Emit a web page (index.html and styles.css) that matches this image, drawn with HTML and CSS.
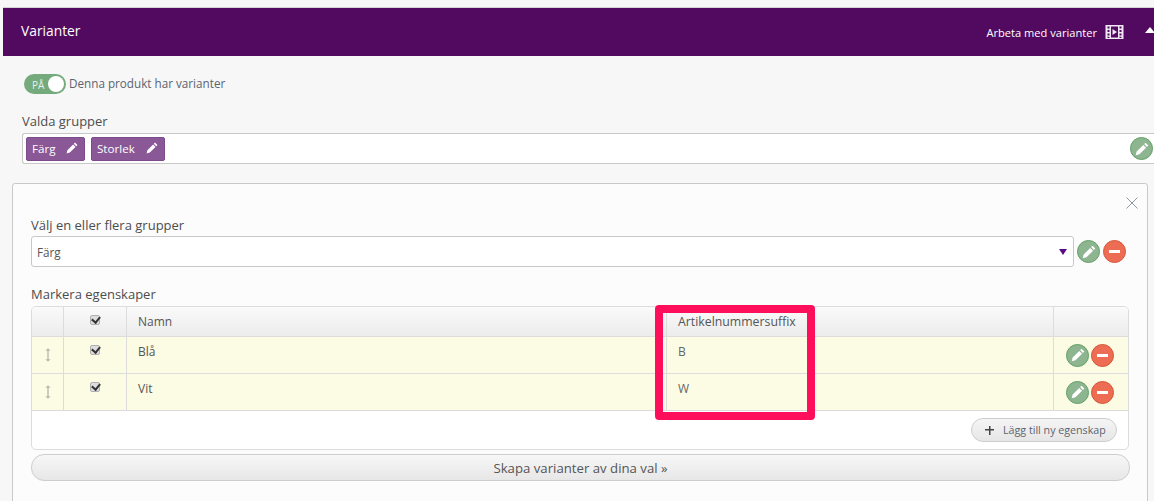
FILE: index.html
```html
<!DOCTYPE html>
<html lang="sv">
<head>
<meta charset="utf-8">
<title>Varianter</title>
<link rel="stylesheet" href="styles.css">
</head>
<body>
<svg class="defs" width="0" height="0" aria-hidden="true">
  <symbol id="pen" viewBox="0 0 12 12"><path d="M9 .6l2.400 2.400-1.200 1.200-2.400-2.400zM7.100 2.500l2.400 2.400-5.700 5.700-3.200.8.8-3.200z" fill="currentColor"/></symbol>
  <symbol id="grip" viewBox="0 0 7 16"><path d="M3.500 0l3 3H4.300v10h2.200l-3 3-3-3h2.200V3H.5z" fill="currentColor"/></symbol>
</svg>
<div class="page">
  <header class="head">
    <h2 class="head-title">Varianter</h2>
    <div class="head-tools">
      <span class="tools-text">Arbeta med varianter</span>
      <svg class="film" viewBox="0 0 18 14" aria-hidden="true"><path fill-rule="evenodd" d="M0 0h18v14H0zM2 1.500v2h2v-2zm0 3.500v2h2V5zm0 3.500v2h2v-2zm0 3v1.500h2V12zM14 1.500v2h2v-2zm0 3.500v2h2V5zm0 3.500v2h2v-2zm0 3v1.500h2V12zM5.500 1.500v11h7v-11z" fill="currentColor"/><path d="M7 4l4.500 3L7 10z" fill="currentColor"/></svg>
      <span class="caret"></span>
    </div>
  </header>

  <div class="toggle-row">
    <span class="toggle"><span class="toggle-text">PÅ</span><span class="knob"></span></span>
    <span class="toggle-label">Denna produkt har varianter</span>
  </div>

  <div class="selected">
    <div class="label">Valda grupper</div>
    <div class="tagbox">
      <span class="tag">Färg<svg class="tag-pen"><use href="#pen"/></svg></span>
      <span class="tag tag-wide">Storlek<svg class="tag-pen"><use href="#pen"/></svg></span>
      <button class="round green box-edit"><svg><use href="#pen"/></svg></button>
    </div>
  </div>

  <section class="card">
    <div class="close-row"><svg class="close" viewBox="0 0 12 12" aria-hidden="true"><path d="M.5.5l11 11M11.500.5l-11 11" stroke="currentColor" fill="none"/></svg></div>
    <div class="label">Välj en eller flera grupper</div>
    <div class="select-row">
      <div class="select"><span>Färg</span><span class="arrow"></span></div>
      <button class="round green"><svg><use href="#pen"/></svg></button>
      <button class="round red"><i></i></button>
    </div>
    <div class="label label-props">Markera egenskaper</div>
    <div class="table">
      <div class="row row-head">
        <div class="c c-grip"></div>
        <div class="c c-check"><span class="check"></span></div>
        <div class="c c-name"><span>Namn</span></div>
        <div class="c c-suffix"><span class="suffix-title">Artikelnummersuffix</span></div>
        <div class="c c-act"></div>
      </div>
      <div class="row">
        <div class="c c-grip"><svg class="grip"><use href="#grip"/></svg></div>
        <div class="c c-check"><span class="check"></span></div>
        <div class="c c-name"><span>Blå</span></div>
        <div class="c c-suffix"><span>B</span></div>
        <div class="c c-act"><button class="round green"><svg><use href="#pen"/></svg></button><button class="round red"><i></i></button></div>
      </div>
      <div class="row">
        <div class="c c-grip"><svg class="grip"><use href="#grip"/></svg></div>
        <div class="c c-check"><span class="check"></span></div>
        <div class="c c-name"><span>Vit</span></div>
        <div class="c c-suffix"><span>W</span></div>
        <div class="c c-act"><button class="round green"><svg><use href="#pen"/></svg></button><button class="round red"><i></i></button></div>
      </div>
      <div class="table-foot"><button class="add"><span class="plus"></span>Lägg till ny egenskap</button></div>
    </div>
    <button class="create">Skapa varianter av dina val »</button>
  </section>
</div>
<div class="highlight"></div>
</body>
</html>
```

FILE: styles.css
```css
* { box-sizing: border-box; }
html, body { margin: 0; height: 501px; overflow: hidden; }
body { background: #f7f7f7; font-family: "Open Sans", "Liberation Sans", sans-serif; font-size: 12px; color: #555; position: relative; }
.defs { position: absolute; }
button { font-family: inherit; padding: 0; }
.page { margin-left: 3px; width: 1165px; padding-top: 7px; }
.head { height: 49px; border-top: 1px solid #d4d4d4; background: #520a60; color: #fff; display: flex; align-items: center; justify-content: space-between; padding: 0 0 4px 18px; }
.head-title { margin: 0; font-size: 13.8px; font-weight: 400; }
.head-tools { display: flex; align-items: center; margin-right: 13px; position: relative; top: 2px; }
.tools-text { font-size: 11.1px; }
.film { width: 19px; height: 14px; margin-left: 8px; color: #f0e6f4; }
.caret { width: 0; height: 0; margin-left: 21px; border: 5px solid transparent; border-top: 0; border-bottom: 6px solid #fff; position: relative; top: -2px; }
.toggle-row { display: flex; align-items: center; gap: 3px; margin: 18px 0 0 21px; height: 20px; color: #5b6470; }
.toggle-label { font-size: 11.7px; position: relative; top: -1px; }
.toggle { width: 42px; height: 20px; border-radius: 10px; background: #74aa7c; display: flex; align-items: center; justify-content: space-between; padding: 0 2px 0 8px; }
.toggle-text { color: #e4f1f2; font-size: 10px; position: relative; top: 1px; }
.knob { width: 16px; height: 16px; border-radius: 50%; background: #fff; }
.label { font-size: 13px; color: #4d4d4d; line-height: 18px; }
.selected { margin: 18px 0 0 19px; }
.tagbox { margin-top: 3px; height: 31px; background: #fff; border: 1px solid #c8c8c8; border-right: 0; border-radius: 3px 0 0 3px; display: flex; align-items: center; gap: 6px; padding-left: 3px; position: relative; }
.tag { height: 24px; width: 59px; display: flex; align-items: center; justify-content: space-between; padding: 0 7px 0 5px; background: #8a5896; border: 1px solid #7d4a8a; border-radius: 2px; color: #fff; font-size: 11.6px; }
.tag-wide { width: 74px; }
.tag-pen { width: 12px; height: 12px; color: #fff; position: relative; left: 1px; top: -1px; }
.round { width: 23px; height: 23px; flex: none; border-radius: 50%; display: inline-flex; align-items: center; justify-content: center; color: #fff; }
.round svg { width: 14px; height: 14px; }
.green { background: #8db58f; border: 1px solid #62a066; }
.red { background: #ec6d54; border: 1px solid #d85538; }
.red i { display: block; width: 11px; height: 3px; background: #fff; }
.box-edit { position: absolute; left: 1107px; top: 3px; }
.card { margin: 19px 0 0 9px; width: 1136px; height: 340px; background: #fcfcfc; border: 1px solid #c9c9c9; border-radius: 3px; padding: 0 18px; }
.close-row { height: 32px; display: flex; justify-content: flex-end; align-items: flex-end; margin-right: -9px; padding-bottom: 7px; }
.close { width: 12px; height: 12px; color: #8d9aa3; }
.select-row { display: flex; align-items: center; gap: 3px; margin-top: 2px; }
.select { width: 1043px; height: 31px; background: #fff; border: 1px solid #c8c8c8; border-radius: 3px; display: flex; align-items: center; justify-content: space-between; padding: 1px 6px 0 5px; font-size: 11.7px; }
.arrow { width: 0; height: 0; border: 4px solid transparent; border-bottom: 0; border-top: 6px solid #5b0a82; }
.label-props { margin-top: 18px; }
.table { margin-top: 3px; width: 1098px; height: 144px; background: #fff; border: 1px solid #dcdcdc; border-radius: 5px; overflow: hidden; }
.row { display: flex; height: 37px; background: #fcfbe3; border-bottom: 1px solid #dcdcdc; }
.row-head { height: 30px; background: linear-gradient(#fafafa, #ececec); }
.c { border-right: 1px solid #dcdcdc; display: flex; }
.c-grip { width: 32px; justify-content: center; align-items: center; color: #b9b9b0; }
.c-check { width: 63px; justify-content: center; padding-top: 8px; }
.c-name { width: 540px; padding: 6px 0 0 11px; }
.c-suffix { width: 387px; padding: 6px 0 0 11px; color: #666; }
.c-act { flex: 1; border-right: 0; justify-content: flex-end; align-items: center; gap: 2px; padding-right: 14px; }
.row-head .c-name, .row-head .c-suffix { color: #555; }
.suffix-title { font-size: 12.3px; }
.grip { width: 6px; height: 16px; }
.check { width: 10px; height: 10px; border-radius: 2px; background: #ddd; border: 1px solid #b0b0b0; position: relative; display: block; }
.check::after { content: ""; position: absolute; left: 2px; top: -1px; width: 4px; height: 6px; border: solid #333; border-width: 0 2px 2px 0; transform: rotate(40deg); }
.table-foot { height: 38px; display: flex; justify-content: flex-end; align-items: center; padding-right: 11px; }
.add { width: 146px; height: 24px; border-radius: 12px; border: 1px solid #cdcdcd; background: linear-gradient(#f5f5f5, #e6e6e6); color: #5b6470; font-size: 10.7px; display: flex; align-items: center; padding-left: 13px; white-space: nowrap; }
.plus { width: 9px; height: 9px; margin-right: 9px; flex: none; background: linear-gradient(#444, #444) center/100% 1.5px no-repeat, linear-gradient(#444, #444) center/1.5px 100% no-repeat; }
.create { display: block; margin-top: 4px; width: 1099px; height: 27px; border-radius: 13px; border: 1px solid #cdcdcd; background: linear-gradient(#f7f7f7, #e7e7e7); color: #555; font-size: 13.2px; }
.highlight { position: absolute; left: 655px; top: 305px; width: 160px; height: 115px; border: 8px solid #ff0f5b; border-radius: 4px; }
```
